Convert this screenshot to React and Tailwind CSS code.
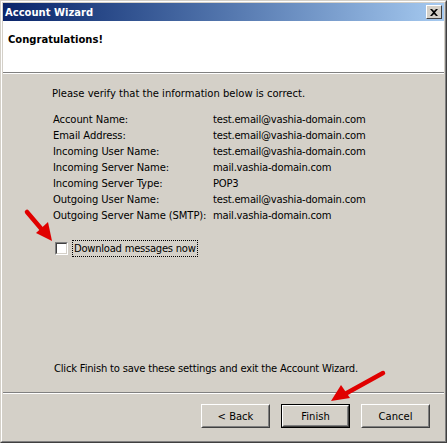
import React from "react";

const rows = [
  ["Account Name:", "test.email@vashia-domain.com"],
  ["Email Address:", "test.email@vashia-domain.com"],
  ["Incoming User Name:", "test.email@vashia-domain.com"],
  ["Incoming Server Name:", "mail.vashia-domain.com"],
  ["Incoming Server Type:", "POP3"],
  ["Outgoing User Name:", "test.email@vashia-domain.com"],
  ["Outgoing Server Name (SMTP):", "mail.vashia-domain.com"],
];

function Btn({ children, def }) {
  const inner = (
    <div className="w-full h-full border border-t-white border-l-white border-r-[#404040] border-b-[#404040]">
      <div className="w-full h-full border border-t-[#d4d0c8] border-l-[#d4d0c8] border-r-[#808080] border-b-[#808080] flex items-center justify-center">
        {children}
      </div>
    </div>
  );
  return def ? (
    <div className="w-[69px] h-[24px] border border-black">{inner}</div>
  ) : (
    <div className="w-[69px] h-[24px]">{inner}</div>
  );
}

export default function App() {
  return (
    <div
      className="relative w-[447px] h-[443px] bg-[#d4d0c8] text-[10px] text-black leading-[13px]"
      style={{ fontFamily: '"DejaVu Sans", Verdana, sans-serif' }}
    >
      <div className="w-full h-full border border-t-[#d4d0c8] border-l-[#d4d0c8] border-r-[#404040] border-b-[#404040]">
        <div className="w-full h-full border border-t-white border-l-white border-r-[#808080] border-b-[#808080] p-px flex flex-col">
          {/* title bar */}
          <div className="h-[18px] flex items-center justify-between pl-[2px] pr-[2px] bg-gradient-to-r from-[#0a246a] to-[#a6caf0]">
            <span className="text-white font-bold text-[10px]">Account Wizard</span>
            <div className="w-[16px] h-[14px] bg-[#d4d0c8] border border-t-white border-l-white border-r-[#404040] border-b-[#404040] flex items-center justify-center">
              <svg width="8" height="7" viewBox="0 0 8 7">
                <path d="M0 0h2l2 2 2-2h2L5 3.5 8 7H6L4 5 2 7H0l3-3.5z" fill="#000" />
              </svg>
            </div>
          </div>
          {/* header */}
          <div className="h-[51px] bg-white pl-[5px] pt-[12px]">
            <span className="font-bold text-[10px]">Congratulations!</span>
          </div>
          <div className="h-px bg-[#808080]" />
          <div className="h-px bg-white" />
          {/* body */}
          <div className="flex-1 flex flex-col pl-[49px] pt-[13px]">
            <div>Please verify that the information below is correct.</div>
            <div className="mt-[11px] flex flex-col">
              {rows.map(([k, v]) => (
                <div key={k} className="flex h-[16px] items-center">
                  <span className="w-[161px] pl-px tracking-[-0.1px]">{k}</span>
                  <span className="tracking-[-0.2px]">{v}</span>
                </div>
              ))}
            </div>
            <div className="mt-[17px] flex items-center gap-[4px] pl-[3px]">
              <div className="w-[13px] h-[13px] border border-t-[#808080] border-l-[#808080] border-r-white border-b-white">
                <div className="w-full h-full border border-t-[#404040] border-l-[#404040] border-r-[#d4d0c8] border-b-[#d4d0c8] bg-white" />
              </div>
              <span className="border border-dotted border-black px-[1px] leading-[15px] tracking-[-0.25px]">
                Download messages now
              </span>
            </div>
            <div className="flex-1" />
            <div className="pl-[2px] mb-[17px] tracking-[-0.2px]">
              Click Finish to save these settings and exit the Account Wizard.
            </div>
          </div>
          <div className="h-px bg-[#808080]" />
          <div className="h-px bg-white" />
          <div className="h-[46px] flex justify-end items-start pt-[10px] pr-[14px] gap-[11px]">
            <Btn>&lt; Back</Btn>
            <Btn def>Finish</Btn>
            <Btn>Cancel</Btn>
          </div>
        </div>
      </div>
      {/* red annotation arrows */}
      <svg className="absolute left-0 top-0 pointer-events-none" width="447" height="443">
        <path d="M27 212 L44 232" stroke="#e00000" strokeWidth="4.5" strokeLinecap="round" />
        <path d="M52 241 L36 233 L48 222 Z" fill="#e00000" />
        <path d="M383 373 L345 394" stroke="#e00000" strokeWidth="4.5" strokeLinecap="round" />
        <path d="M331 401 L341 385 L350 398 Z" fill="#e00000" />
      </svg>
    </div>
  );
}
